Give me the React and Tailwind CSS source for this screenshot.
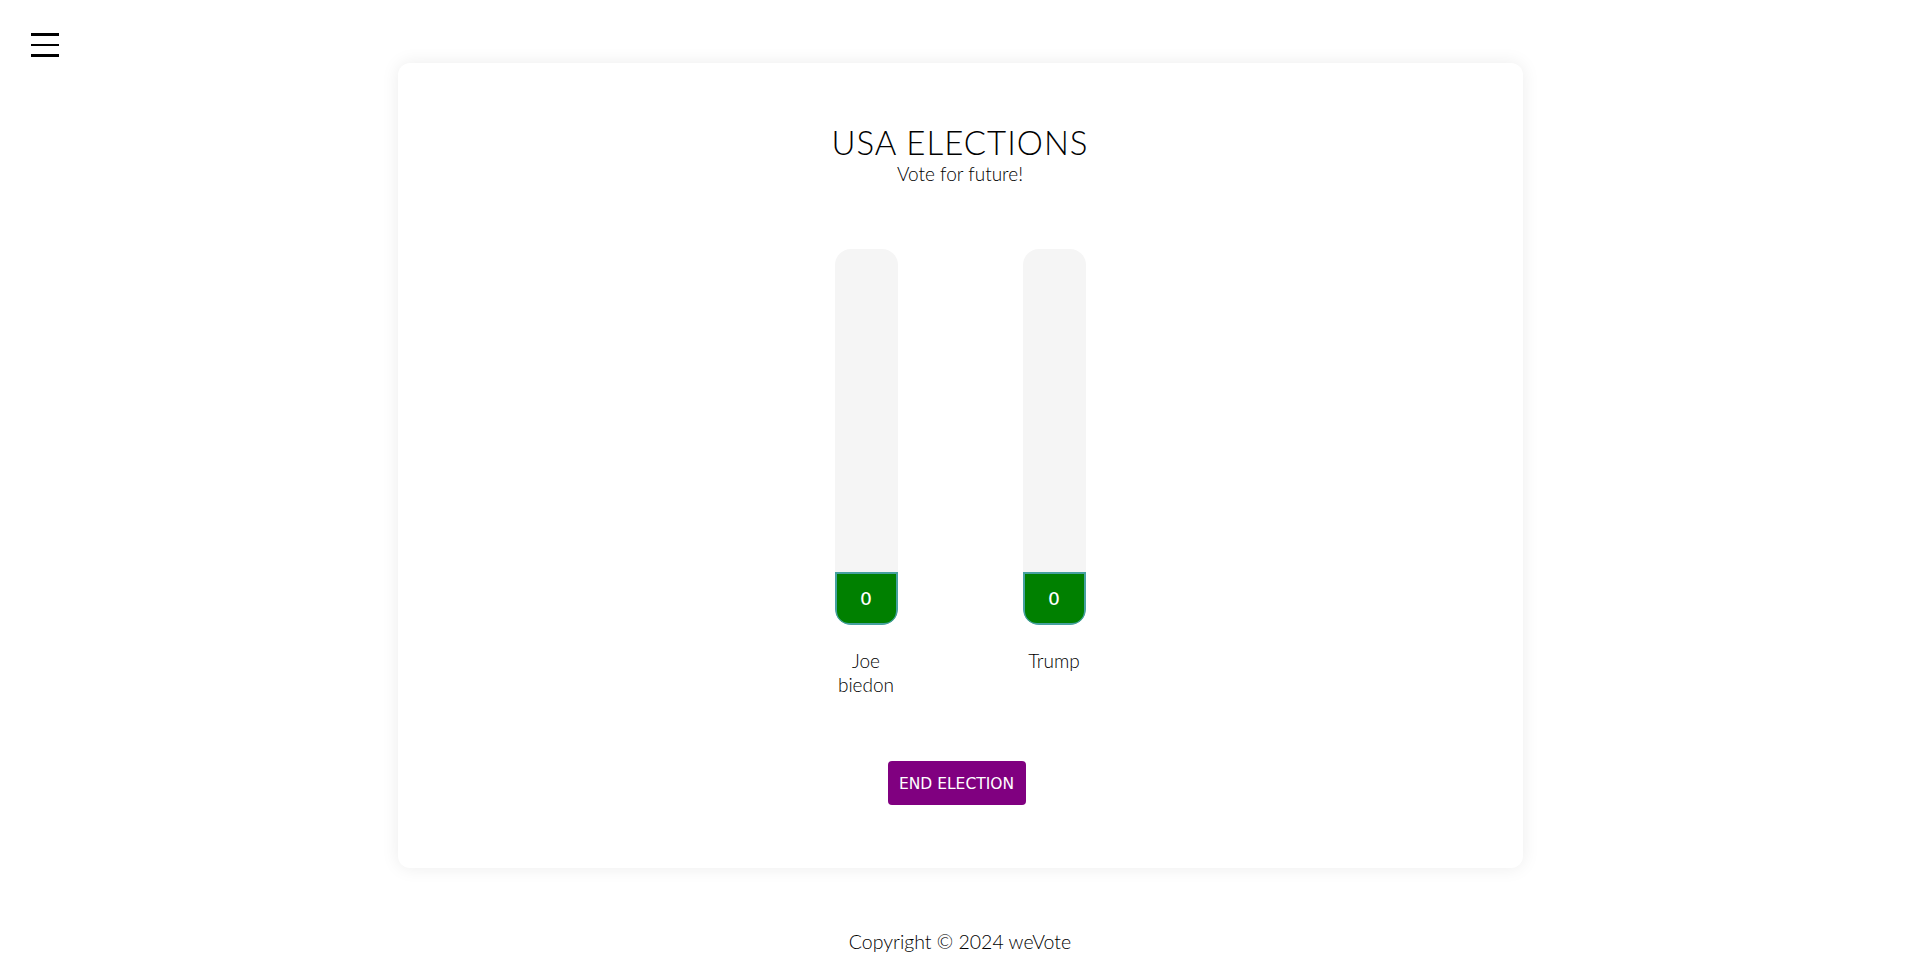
import React from "react";

const candidates = [
  { name: "Joe biedon", votes: 0 },
  { name: "Trump", votes: 0 },
];

export default function App() {
  return (
    <div className="min-h-[978px] bg-white text-black" style={{ fontFamily: "Lato, 'Open Sans', sans-serif" }}>
      <div className="h-[63px] relative">
        <button className="absolute left-[31px] top-[33px] flex flex-col gap-[8px]">
          <span className="block w-[28px] h-[2.5px] bg-black"></span>
          <span className="block w-[28px] h-[2.5px] bg-black"></span>
          <span className="block w-[28px] h-[2.5px] bg-black"></span>
        </button>
      </div>
      <div className="mx-auto w-[1125px] h-[805px] rounded-[12px] bg-white shadow-[0_0_18px_rgba(0,0,0,0.08)] flex flex-col items-center pt-[59px]">
        <h1 className="text-[33px] leading-[40px] font-light tracking-[1px] text-black">USA ELECTIONS</h1>
        <p className="text-[19px] leading-[24px] font-light mt-[0px] text-black">Vote for future!</p>
        <div className="flex gap-[125px] mt-[63px]">
          {candidates.map((c) => (
            <div key={c.name} className="w-[63px] flex flex-col items-center">
              <div className="w-[63px] h-[376px] rounded-[16px] bg-[#f5f5f5] flex flex-col justify-end overflow-hidden">
                <div className="h-[53px] bg-[#008000] border-2 border-[#46a0a0] rounded-b-[14px] flex items-center justify-center text-white text-[18px] font-semibold">
                  {c.votes}
                </div>
              </div>
              <div className="mt-[24px] text-[19px] leading-[24px] font-light text-center text-black">{c.name}</div>
            </div>
          ))}
        </div>
        <button className="mt-[64px] ml-[-7px] w-[138px] h-[44px] pt-[3px] rounded-[4px] bg-[#800080] text-white" style={{ fontFamily: "'DejaVu Sans', Verdana, sans-serif", fontSize: "15.5px" }}>
          END ELECTION
        </button>
      </div>
      <div className="text-center text-[19.5px] font-light mt-[62px] leading-[24px] text-black">Copyright © 2024 weVote</div>
    </div>
  );
}
